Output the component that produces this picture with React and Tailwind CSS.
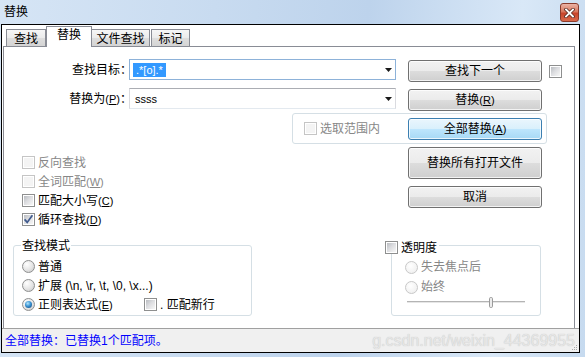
import React from "react";

const FONT = "font-['Liberation_Sans','Noto_Sans_CJK_SC',sans-serif]";
const BTN_GRAD =
  "border-[#707070] bg-[linear-gradient(to_bottom,#f2f2f2_0%,#ebebeb_50%,#dddddd_50%,#cfcfcf_100%)]";
const BTN_FOCUS =
  "border-[#3c7fb1] bg-[linear-gradient(to_bottom,#eaf6fd_0%,#d9f0fc_50%,#bee6fd_50%,#a7d9f5_100%)]";

function Acc({ k }) {
  return (
    <span className="text-[11px]">
      (<span className="underline underline-offset-1">{k}</span>)
    </span>
  );
}

function CheckBox({ checked, disabled }) {
  return (
    <span
      className={`flex h-[13px] w-[13px] shrink-0 border bg-white p-[1px] ${
        disabled ? "border-[#c5c5c5]" : "border-[#8e8f8f]"
      }`}
    >
      <span
        className={`flex h-full w-full ${
          disabled
            ? "bg-[#f4f4f4]"
            : "bg-[linear-gradient(135deg,#b9bcc1_0%,#dcdde0_45%,#f7f7f7_100%)]"
        }`}
      >
        {checked && (
          <svg width="9" height="9" viewBox="0 0 9 9" className="overflow-visible">
            <path d="M0.6 4.4 L3.2 7.4 L8.4 0.2" fill="none" stroke="#3f5a8e" strokeWidth="1.7" />
          </svg>
        )}
      </span>
    </span>
  );
}

function Radio({ checked, disabled }) {
  return (
    <span
      className={`flex h-[13px] w-[13px] shrink-0 items-center justify-center rounded-full border ${
        disabled
          ? "border-[#c8c8c8] bg-[radial-gradient(circle_at_40%_35%,#ffffff_0%,#ececec_100%)]"
          : "border-[#8e8f8f] bg-[radial-gradient(circle_at_35%_30%,#ffffff_0%,#e4e4e4_55%,#c4c4c4_100%)]"
      }`}
    >
      {checked && (
        <span className="h-[7px] w-[7px] rounded-full bg-[radial-gradient(circle_at_40%_35%,#b4e6fb_0%,#3a93d3_45%,#0f3c6e_100%)]" />
      )}
    </span>
  );
}

function Btn({ children, focus, className = "" }) {
  return (
    <div
      className={`flex w-[134px] shrink-0 items-center justify-center rounded-[3px] border shadow-[inset_0_0_0_1px_rgba(255,255,255,0.75)] ${
        focus ? BTN_FOCUS : BTN_GRAD
      } ${className}`}
    >
      {children}
    </div>
  );
}

function Combo({ children, focus }) {
  return (
    <div
      className={`flex h-[21px] w-[267px] shrink-0 items-center border bg-white pl-[3px] pr-[3px] ${
        focus
          ? "border-[#8db2d9]"
          : "border-[#abadb3] border-x-[#dadbe0] border-b-[#e3e9ef]"
      }`}
    >
      <div className="flex-1 text-[11px]">{children}</div>
      <svg width="7" height="4" viewBox="0 0 7 4">
        <path d="M0 0H7L3.5 4Z" fill="#1a1a1a" />
      </svg>
    </div>
  );
}

function Tab({ label, selected, className = "" }) {
  if (selected) {
    return (
      <div
        className={`relative z-10 -mb-px flex h-[21px] shrink-0 justify-center border-x border-t border-[#898c95] bg-white pt-[1px] ${className}`}
      >
        {label}
      </div>
    );
  }
  return (
    <div
      className={`flex h-[17px] shrink-0 justify-center border-x border-t border-[#898c95] bg-[linear-gradient(to_bottom,#f6f6f6_0%,#ebebeb_50%,#dedede_50%,#d4d4d4_100%)] pt-[2px] ${className}`}
    >
      {label}
    </div>
  );
}

function CheckRow({ label, checked, disabled }) {
  return (
    <div className="flex h-[19px] items-center gap-[3px]">
      <CheckBox checked={checked} disabled={disabled} />
      <span className={disabled ? "text-[#878787]" : ""}>{label}</span>
    </div>
  );
}

function CloseBtn({ className = "" }) {
  return (
    <div
      className={`flex h-[19px] w-[19px] items-center justify-center rounded-[3px] border border-[#8a3b2c] bg-[linear-gradient(to_bottom,#eab3a6_0%,#d9785f_45%,#c8442b_55%,#d96a4c_100%)] ${className}`}
    >
      <svg width="11" height="10" viewBox="0 0 11 10">
        <path d="M2 1.5 L9 8.5 M9 1.5 L2 8.5" stroke="#5a2a22" strokeWidth="3.4" strokeLinecap="square" />
        <path d="M2 1.5 L9 8.5 M9 1.5 L2 8.5" stroke="#ffffff" strokeWidth="1.8" strokeLinecap="square" />
      </svg>
    </div>
  );
}

export default function App() {
  return (
    <div
      className={`${FONT} flex h-[357px] w-[585px] flex-col overflow-hidden bg-[linear-gradient(95deg,#d6e5f5_0%,#c8dbf0_35%,#bdd3ec_60%,#d9e8f7_85%,#c6daef_100%)] text-[12px] leading-[14px] text-black`}
    >
      {/* title bar */}
      <div className="flex h-[24px] shrink-0 items-start">
        <span className="ml-[4px] mt-[5px]">替换</span>
        <CloseBtn className="ml-auto mr-[6px] mt-[3px]" />
      </div>

      {/* client area */}
      <div className="ml-[1px] flex h-[329px] w-[579px] shrink-0 flex-col border border-black bg-white">
        {/* tabs */}
        <div className="mt-[1px] flex h-[20px] items-end pl-[4px]">
          <Tab label="查找" className="w-[40px]" />
          <Tab label="替换" selected className="w-[46px]" />
          <Tab label="文件查找" className="-ml-px w-[59px]" />
          <Tab label="标记" className="ml-[1px] w-[39px]" />
        </div>

        {/* tab panel */}
        <div className="ml-[1px] flex h-[282px] w-[572px] shrink-0 flex-col border-x border-t border-[#898c95]">
          {/* find what */}
          <div className="mt-[12px] flex items-start">
            <div className="flex h-[21px] w-[125px] items-center justify-end">
              <span className="-mr-[3px] whitespace-nowrap">查找目标：</span>
            </div>
            <Combo focus>
              <span className="bg-[#3399ff] px-[3px] py-[1px] text-white">.*[o].*</span>
            </Combo>
            <Btn className="ml-[12px] mt-[1px] h-[22px]">查找下一个</Btn>
            <span className="ml-[7px] mt-[6px]">
              <CheckBox />
            </span>
          </div>

          {/* replace with */}
          <div className="mt-[6px] flex items-start">
            <div className="flex h-[21px] w-[125px] items-center justify-end">
              <span className="-mr-[3px] whitespace-nowrap">
                替换为<Acc k="P" />：
              </span>
            </div>
            <Combo>
              <span className="pl-[2px]">ssss</span>
            </Combo>
            <Btn className="ml-[12px] mt-[1px] h-[22px]">
              替换<Acc k="R" />
            </Btn>
          </div>

          {/* in selection group */}
          <div className="ml-[288px] mt-[2px] flex h-[31px] w-[255px] items-center rounded-[3px] border border-[#d5dfe5] pl-[11px]">
            <CheckBox disabled />
            <span className="ml-[3px] text-[#878787]">选取范围内</span>
            <Btn focus className="ml-auto mr-[4px] h-[22px]">
              全部替换<Acc k="A" />
            </Btn>
          </div>

          {/* options + buttons */}
          <div className="mt-[3px] flex items-start">
            <div className="ml-[18px] flex flex-col pt-[6px]">
              <CheckRow label="反向查找" disabled />
              <CheckRow
                label={
                  <>
                    全词匹配<Acc k="W" />
                  </>
                }
                disabled
              />
              <CheckRow
                label={
                  <>
                    匹配大小写<Acc k="C" />
                  </>
                }
              />
              <CheckRow
                label={
                  <>
                    循环查找<Acc k="D" />
                  </>
                }
                checked
              />
            </div>
            <div className="ml-auto mr-[32px] flex flex-col gap-[7px]">
              <Btn className="h-[32px]">替换所有打开文件</Btn>
              <Btn className="h-[22px]">取消</Btn>
            </div>
          </div>

          {/* search mode + transparency */}
          <div className="mt-[16px] flex items-start">
            <div className="relative ml-[9px] h-[71px] w-[239px] rounded-[3px] border border-[#d5dfe5] pl-[8px] pt-[11px]">
              <span className="absolute left-[7px] top-[-7px] bg-white px-[1px]">查找模式</span>
              <div className="flex h-[19px] items-center gap-[3px]">
                <Radio />
                <span>普通</span>
              </div>
              <div className="flex h-[19px] items-center gap-[3px]">
                <Radio />
                <span>扩展 (\n, \r, \t, \0, \x...)</span>
              </div>
              <div className="flex h-[19px] items-center">
                <div className="flex w-[122px] items-center gap-[3px]">
                  <Radio checked />
                  <span>
                    正则表达式<Acc k="E" />
                  </span>
                </div>
                <CheckBox />
                <span className="ml-[3px]">. 匹配新行</span>
              </div>
            </div>

            <div className="relative ml-[139px] h-[71px] w-[150px] rounded-[3px] border border-[#d5dfe5] pl-[13px] pt-[11px]">
              <div className="absolute left-[-7px] top-[-5px] flex h-[13px] items-center gap-[3px] bg-white pr-[2px]">
                <CheckBox />
                <span>透明度</span>
              </div>
              <div className="flex h-[20px] items-center gap-[3px]">
                <Radio disabled />
                <span className="text-[#878787]">失去焦点后</span>
              </div>
              <div className="flex h-[20px] items-center gap-[3px]">
                <Radio disabled />
                <span className="text-[#878787]">始终</span>
              </div>
              <svg width="118" height="11" viewBox="0 0 118 11" className="ml-[2px]">
                <rect x="0" y="4" width="118" height="1" fill="#b4b4b4" />
                <rect x="0" y="5" width="118" height="1" fill="#e6e6e6" />
                <rect x="82.5" y="0.5" width="3" height="10" rx="1.2" fill="#ececec" stroke="#9a9a9a" />
              </svg>
            </div>
          </div>
        </div>

        {/* status bar */}
        <div className="relative flex h-[24px] shrink-0 items-center border-t border-[#a0a0a0] bg-[#f0f0f0]">
          <span className="pl-[3px] text-[#0000ff]">全部替换：已替换1个匹配项。</span>
          <span className="ml-auto whitespace-nowrap pr-[4px] text-[16px] leading-[18px] text-[#e6e6e6] [text-shadow:0_0_1px_#bdbdbd]">
            g.csdn.net/weixin_44369955
          </span>
          <svg width="7" height="7" viewBox="0 0 7 7" className="absolute bottom-[1px] right-[1px]">
            <rect x="5" y="1" width="1" height="1" fill="#a8a8a8" />
            <rect x="3" y="3" width="1" height="1" fill="#a8a8a8" />
            <rect x="5" y="3" width="1" height="1" fill="#a8a8a8" />
            <rect x="1" y="5" width="1" height="1" fill="#a8a8a8" />
            <rect x="3" y="5" width="1" height="1" fill="#a8a8a8" />
            <rect x="5" y="5" width="1" height="1" fill="#a8a8a8" />
          </svg>
        </div>
      </div>
    </div>
  );
}
